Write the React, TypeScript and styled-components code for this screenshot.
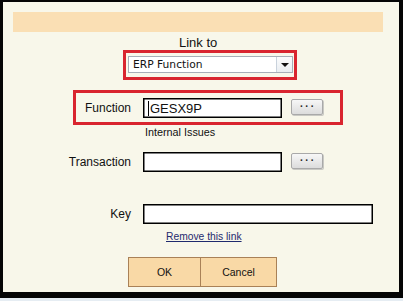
import React from "react";
import styled, { createGlobalStyle } from "styled-components";

const Global = createGlobalStyle`
  html, body { margin: 0; padding: 0; background: #e6edf3; }
  body { font-family: "Liberation Sans", Arial, sans-serif; }
`;

const Frame = styled.div`
  box-sizing: border-box;
  width: 403px;
  height: 298px;
  border-style: solid;
  border-color: #050505;
  border-width: 2px 4px 6px 3px;
  background: #f8f7ea;
  display: flex;
  flex-direction: column;
`;

const HeaderBar = styled.div`
  height: 20px;
  margin: 10px 16px 0 10px;
  background: #fadfb4;
`;

const Form = styled.div`
  display: flex;
  flex-direction: column;
  align-items: flex-start;
  padding-left: 57px;
`;

const Caption = styled.div`
  margin-top: 4px;
  margin-left: 119px;
  font-size: 13px;
  line-height: 14px;
  color: #111;
`;

const RedBox = styled.div<{ $ml: number; $mt: number }>`
  margin-left: ${(p) => p.$ml}px;
  margin-top: ${(p) => p.$mt}px;
  border: 3px solid #d9252f;
  display: flex;
  align-items: center;
`;

const SelectBox = styled(RedBox)`
  padding: 3px 1px 4px 2px;
`;

const FieldBox = styled(RedBox)`
  width: 270px;
  box-sizing: border-box;
  padding: 5px 0 4px 0;
`;

const Select = styled.div`
  box-sizing: border-box;
  width: 165px;
  height: 17px;
  border: 1px solid #a7aeb8;
  background: #fff;
  display: flex;
  align-items: stretch;
`;

const SelectText = styled.div`
  flex: 1;
  padding-left: 4px;
  font-family: "DejaVu Sans", Verdana, sans-serif;
  font-size: 10.7px;
  line-height: 15px;
  color: #111;
`;

const Arrow = styled.div`
  width: 15px;
  border-left: 1px solid #c9d2dc;
  background: linear-gradient(#fbfcfd, #e9edf1);
  display: flex;
  align-items: center;
  justify-content: center;
  &::after {
    content: "";
    width: 0;
    height: 0;
    border-left: 4px solid transparent;
    border-right: 4px solid transparent;
    border-top: 4px solid #111;
    margin-top: 1px;
  }
`;

const Row = styled.div<{ $mt: number }>`
  display: flex;
  align-items: center;
  margin-top: ${(p) => p.$mt}px;
`;

const Label = styled.div<{ $w: number }>`
  width: ${(p) => p.$w}px;
  text-align: right;
  font-size: 12px;
  line-height: 14px;
  color: #111;
  margin-right: 12px;
  white-space: nowrap;
`;

const Input = styled.div<{ $w: number }>`
  box-sizing: border-box;
  width: ${(p) => p.$w}px;
  height: 20px;
  border: 1px solid #000;
  box-shadow: inset 0 0 0 0.5px #000;
  background: #fff;
  display: flex;
  align-items: center;
  padding-left: 4px;
  font-size: 13px;
  color: #111;
`;

const Caret = styled.span`
  width: 1px;
  height: 15px;
  background: #000;
  margin-right: 1px;
`;

const Dots = styled.button`
  box-sizing: border-box;
  width: 32px;
  height: 16px;
  margin-left: 9px;
  margin-top: -2px;
  padding: 0 0 0 2px;
  border: 1px solid #a9a9a9;
  border-radius: 2px;
  background: linear-gradient(#f7f7f7, #dcdcdc);
  box-shadow: 1px 1px 0 #c9c9c4;
  font-family: "Liberation Sans", Arial, sans-serif;
  font-size: 10px;
  font-weight: bold;
  letter-spacing: 2px;
  line-height: 10px;
  color: #222;
  display: flex;
  align-items: center;
  justify-content: center;
`;

const Note = styled.div<{ $ml: number; $mt: number }>`
  margin-left: ${(p) => p.$ml}px;
  margin-top: ${(p) => p.$mt}px;
  font-size: 10.8px;
  line-height: 13px;
  color: #111;
`;

const LinkText = styled.a`
  margin-left: 106px;
  margin-top: 6px;
  font-size: 10.3px;
  line-height: 13px;
  color: #1f2a6e;
  text-decoration: underline;
`;

const ButtonBar = styled.div`
  display: flex;
  margin-left: 68px;
  margin-top: 14px;
`;

const ActionButton = styled.button<{ $w: number }>`
  box-sizing: border-box;
  width: ${(p) => p.$w}px;
  height: 30px;
  border: 1px solid #a98157;
  background: #f9d9a6;
  font-family: "Liberation Sans", Arial, sans-serif;
  font-size: 10.5px;
  color: #111;
  padding: 0;
  & + & {
    border-left: none;
  }
`;

export default function App() {
  return (
    <>
      <Global />
      <Frame>
        <HeaderBar />
        <Form>
          <Caption>Link to</Caption>
          <SelectBox $ml={63} $mt={0}>
            <Select>
              <SelectText>ERP Function</SelectText>
              <Arrow />
            </Select>
          </SelectBox>
          <FieldBox $ml={13} $mt={10}>
            <Label $w={55}>Function</Label>
            <Input $w={139}>
              <Caret />
              GESX9P
            </Input>
            <Dots>···</Dots>
          </FieldBox>
          <Note $ml={85} $mt={1}>Internal Issues</Note>
          <Row $mt={13}>
            <Label $w={71}>Transaction</Label>
            <Input $w={139} />
            <Dots>···</Dots>
          </Row>
          <Row $mt={32}>
            <Label $w={71}>Key</Label>
            <Input $w={230} />
          </Row>
          <LinkText>Remove this link</LinkText>
          <ButtonBar>
            <ActionButton $w={73}>OK</ActionButton>
            <ActionButton $w={76}>Cancel</ActionButton>
          </ButtonBar>
        </Form>
      </Frame>
    </>
  );
}
